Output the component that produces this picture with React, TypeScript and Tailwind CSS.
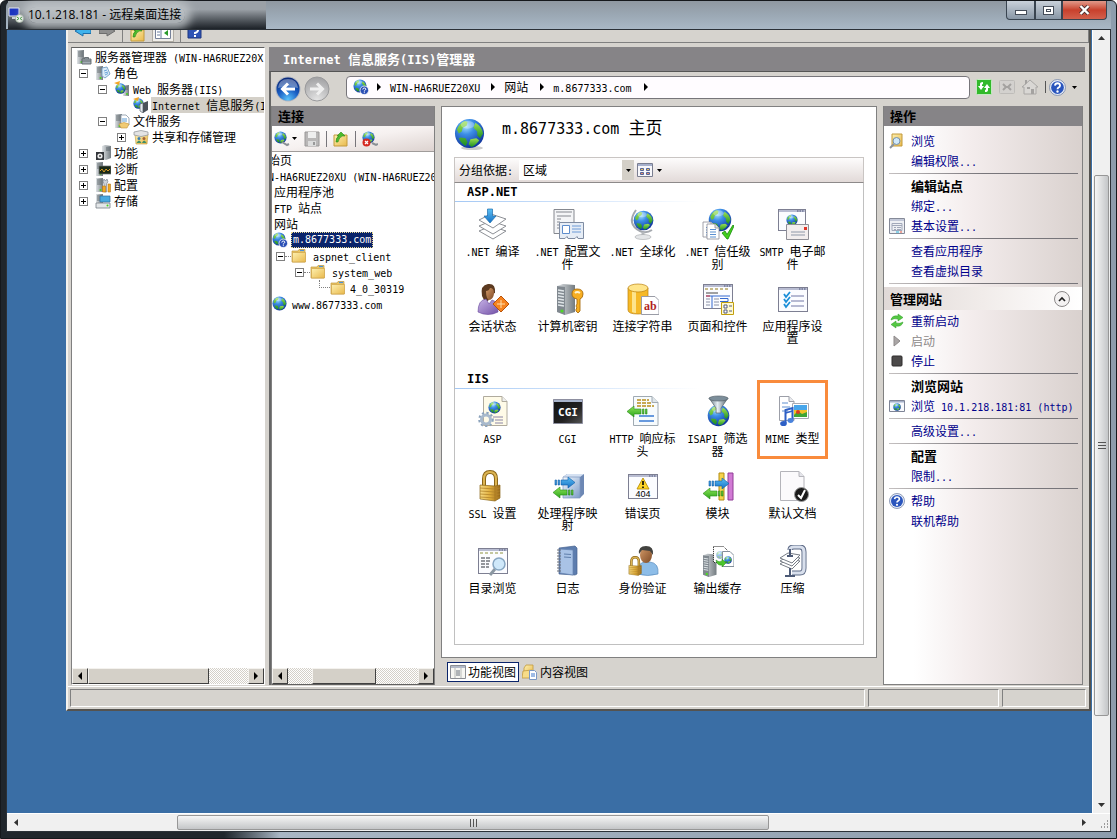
import { Fragment, type ReactNode } from "react";
import clsx from "clsx";

/* ---------- TEXT ---------- */

const latinSize = {
  base: "text-[10px]",
  heading: "text-[12px]",
  title: "text-[15px]",
};

// Latin runs use a half-width mono face so they sit on the same grid as the CJK glyphs
function T({ children, size = "base" }: { children: string; size?: keyof typeof latinSize }) {
  return (
    <>
      {children.split(/([\x20-\x7e]+)/).map((part, i) =>
        i % 2 ? (
          <span
            key={i}
            className={clsx("font-['DejaVu_Sans_Mono','Liberation_Mono',monospace] leading-none", latinSize[size])}
          >
            {part}
          </span>
        ) : (
          <Fragment key={i}>{part}</Fragment>
        )
      )}
    </>
  );
}

/* ---------- DRAWING PARTS ---------- */

function Defs() {
  return (
    <svg width="0" height="0" className="absolute" aria-hidden="true">
      <defs>
        <radialGradient id="sea" cx="0.38" cy="0.25" r="0.8">
          <stop offset="0" stopColor="#a9e2fb" />
          <stop offset="0.35" stopColor="#3c8ee6" />
          <stop offset="1" stopColor="#0c2c96" />
        </radialGradient>
        <linearGradient id="land" x1="0" y1="0" x2="0" y2="1">
          <stop offset="0" stopColor="#9be052" />
          <stop offset="1" stopColor="#1d8f22" />
        </linearGradient>
        <linearGradient id="gold" x1="0" y1="0" x2="1" y2="0">
          <stop offset="0" stopColor="#f7dc86" />
          <stop offset="0.5" stopColor="#e0ae3c" />
          <stop offset="1" stopColor="#99681a" />
        </linearGradient>
        <linearGradient id="folder" x1="0" y1="0" x2="1" y2="1">
          <stop offset="0" stopColor="#fdf0b0" />
          <stop offset="1" stopColor="#e9b94c" />
        </linearGradient>
        <linearGradient id="steel" x1="0" y1="0" x2="1" y2="0">
          <stop offset="0" stopColor="#dfe3e6" />
          <stop offset="1" stopColor="#737b80" />
        </linearGradient>
        <linearGradient id="funnel" x1="0" y1="0" x2="1" y2="0">
          <stop offset="0" stopColor="#5c6f7c" />
          <stop offset="0.45" stopColor="#e6eef3" />
          <stop offset="1" stopColor="#4a5a66" />
        </linearGradient>
        <linearGradient id="box" x1="0" y1="0" x2="1" y2="1">
          <stop offset="0" stopColor="#f4f9fe" />
          <stop offset="1" stopColor="#7c9bc8" />
        </linearGradient>
        <linearGradient id="blueArrow" x1="0" y1="0" x2="0" y2="1">
          <stop offset="0" stopColor="#5cc0f5" />
          <stop offset="1" stopColor="#1670c4" />
        </linearGradient>
        <linearGradient id="greenArrow" x1="0" y1="0" x2="0" y2="1">
          <stop offset="0" stopColor="#8fe45a" />
          <stop offset="1" stopColor="#2ba51a" />
        </linearGradient>
        <radialGradient id="ball" cx="0.5" cy="0.95" r="0.9">
          <stop offset="0" stopColor="#5ac3fb" />
          <stop offset="0.5" stopColor="#1a5fc4" />
          <stop offset="1" stopColor="#0a2a7c" />
        </radialGradient>
        <radialGradient id="grayBall" cx="0.5" cy="0.95" r="0.9">
          <stop offset="0" stopColor="#e4e4e4" />
          <stop offset="1" stopColor="#a4a4a6" />
        </radialGradient>
        <linearGradient id="skin" x1="0" y1="0" x2="1" y2="1">
          <stop offset="0" stopColor="#d49a68" />
          <stop offset="1" stopColor="#7e4a26" />
        </linearGradient>
        <linearGradient id="purple" x1="0" y1="0" x2="1" y2="1">
          <stop offset="0" stopColor="#c7b3e6" />
          <stop offset="1" stopColor="#7453a8" />
        </linearGradient>
        <linearGradient id="dark" x1="0" y1="0" x2="1" y2="1">
          <stop offset="0" stopColor="#111" />
          <stop offset="0.6" stopColor="#222" />
          <stop offset="1" stopColor="#555" />
        </linearGradient>
      </defs>
    </svg>
  );
}

type IconProps = { size?: number; view?: number; children?: ReactNode };

function Icon({ size = 16, view = 16, children }: IconProps) {
  return (
    <svg width={size} height={size} viewBox={`0 0 ${view} ${view}`} className="block shrink-0" aria-hidden="true">
      {children}
    </svg>
  );
}

function Globe({ x = 0, y = 0, s = 16 }: { x?: number; y?: number; s?: number }) {
  return (
    <svg x={x} y={y} width={s} height={s} viewBox="0 0 32 32">
      <circle cx="16" cy="16" r="15" fill="url(#sea)" />
      <path d="M3 12q2-6 8-9l3 1-1 4-4 2-1 4-3 2zM7 20l5 1 2 4-2 4q-5-3-7-8z" fill="url(#land)" />
      <path d="M17 22l6-1 3 2q-3 5-8 7l-3-3z" fill="url(#land)" />
      <path d="M22 5q7 4 8 11l-3 5-3-3 0-4-4-4z" fill="url(#land)" />
      <ellipse cx="14" cy="7" rx="7" ry="4" fill="#fff" opacity="0.3" />
    </svg>
  );
}

function Page({ x, y, w, h, lines = "#5a8fd0" }: { x: number; y: number; w: number; h: number; lines?: string }) {
  return (
    <g>
      <path d={`M${x} ${y}h${w - 4}l4 4v${h - 4}h${-w}z`} fill="#fff" stroke="#8a8c96" strokeWidth="0.8" />
      <path d={`M${x + w - 4} ${y}v4h4`} fill="#e4e6ea" stroke="#8a8c96" strokeWidth="0.8" />
      <path
        d={`M${x + 3} ${y + h / 2 - 2}h${w - 6}m${6 - w} 2.500h${w - 6}m${6 - w} 2.500h${w - 6}m${6 - w} 2.500h${w - 6}`}
        stroke={lines}
        strokeWidth="1.2"
      />
    </g>
  );
}

function Frame({ x = 1, y = 3, w = 29, h = 24 }: { x?: number; y?: number; w?: number; h?: number }) {
  return (
    <g>
      <rect x={x + 0.5} y={y + 0.5} width={w} height={h} fill="#fbfcff" stroke="#7d7f92" />
      <rect x={x + 1} y={y + 1} width={w - 1} height="2" fill="#b9bdd2" />
      <path d={`M${x + w - 8} ${y + 2}h1.5m1 0h1.5m1 0h1.500`} stroke="#4c5478" strokeWidth="1.2" />
    </g>
  );
}

function Tower({ x = 0, y = 0, s = 32 }: { x?: number; y?: number; s?: number }) {
  return (
    <svg x={x} y={y} width={s} height={s} viewBox="0 0 32 32">
      <path d="M4 3l6-2 12 1v27l-10 3-8-3z" fill="url(#steel)" />
      <path d="M4 3l8 1v28l-8-3z" fill="#80888f" />
      <path d="M5 7l6 1M5 10l6 1M5 13l6 1M5 16l6 1M5 19l6 1M5 22l6 1" stroke="#dfe5e8" strokeWidth="1.3" />
      <circle cx="9" cy="28" r="1.600" fill="#4dd827" />
    </svg>
  );
}

function Lock({ x = 0, y = 0, s = 32 }: { x?: number; y?: number; s?: number }) {
  return (
    <svg x={x} y={y} width={s} height={s} viewBox="0 0 32 32">
      <path d="M7 17V9q0-7 6-7t6 7v8" fill="none" stroke="#8a6518" strokeWidth="4" />
      <path d="M7 17V9q0-7 6-7t6 7v8" fill="none" stroke="#dcb452" strokeWidth="2" />
      <path d="M3 15l15 1 5-1v13l-5 3-15-2z" fill="url(#gold)" stroke="#8a6518" strokeWidth="0.7" />
      <path d="M3 18l15 1 5-1M3 21l15 1 5-1M3 24l15 1 5-1M3 27l15 1 5-1" stroke="#b3842a" fill="none" strokeWidth="0.8" />
      <path d="M18 16v15" stroke="#a3741e" strokeWidth="0.7" />
    </svg>
  );
}

function ArrowR({ x, y }: { x: number; y: number }) {
  return (
    <g transform={`translate(${x} ${y})`} fill="url(#blueArrow)" stroke="#0d5ca8" strokeWidth="0.6">
      <path d="M0 3h1.500v5H0zM3 3h1.500v5H3zM6 3h7V0l7 5.500L13 11V8H6z" />
    </g>
  );
}

function ArrowL({ x, y }: { x: number; y: number }) {
  return (
    <g transform={`translate(${x} ${y})`} fill="url(#greenArrow)" stroke="#258a17" strokeWidth="0.6">
      <path d="M20 3h-1.500v5H20zM17 3h-1.500v5H17zM14 3H7V0L0 5.500 7 11V8h7z" />
    </g>
  );
}

function HelpIcon({ size = 17 }: { size?: number }) {
  return (
    <Icon size={size}>
      <circle cx="8" cy="8" r="7.500" fill="#e9eef8" stroke="#7686a8" strokeWidth="0.8" />
      <circle cx="8" cy="8" r="6" fill="#2a55bd" />
      <path d="M5.600 6.200Q5.800 4 8 4t2.400 2Q10.400 7.200 9 8q-1 .6-1 1.600" fill="none" stroke="#fff" strokeWidth="1.700" />
      <circle cx="8" cy="11.800" r="1.100" fill="#fff" />
    </Icon>
  );
}

function GlobeHelp() {
  return (
    <Icon>
      <Globe s={14} />
      <circle cx="11.300" cy="11.300" r="4.300" fill="#2a4fb5" stroke="#fff" strokeWidth="0.8" />
      <path d="M9.800 10.500q0-1.500 1.500-1.500t1.500 1.300q0 .7-1.500 1.500v.7M11.300 13.200v1" fill="none" stroke="#fff" />
    </Icon>
  );
}

function FolderIcon() {
  return (
    <Icon>
      <path d="M1 3h6l1-1.500h6V14H1z" fill="#eac563" stroke="#c29a3c" strokeWidth="0.700" />
      <path d="M1.500 4.500h13V14h-13z" fill="url(#folder)" stroke="#cfa449" strokeWidth="0.700" />
      <path d="M9 2.500h4" stroke="#4a90d8" strokeWidth="1.200" />
    </Icon>
  );
}

function FolderUp() {
  return (
    <Icon>
      <path d="M1 4h13v11H1z" fill="url(#folder)" stroke="#c29a3c" />
      <path d="M3 11q0-5 3-6H4l4-4 4 4H9.500Q6 6 5 11z" fill="#4bbb2c" stroke="#2b861a" strokeWidth="0.600" />
    </Icon>
  );
}

function RolesIcon({ kind }: { kind: string }) {
  return (
    <Icon>
      <path d="M1 1h7v14H1z" fill="url(#steel)" />
      <path d="M2 3h5M2 5h5M2 7h5" stroke="#5d666c" strokeWidth="0.900" />
      <circle cx="5.500" cy="13" r="1" fill="#45d21c" />
      {kind === "server" && <path d="M6 10h9v5H6zM8.500 10V8.500h4V10M6 12h9" fill="#a4adb4" stroke="#5d666c" strokeWidth="0.900" />}
      {kind === "roles" && (
        <>
          <path d="M7 3l5-1 3 7-5 4-3-2z" fill="#dcebf8" stroke="#6f9ec4" strokeWidth="0.900" />
          <path d="M9 6l3-1M9.500 8l3.500-1M10 10l3-1.500" stroke="#4c92cf" strokeWidth="0.800" />
        </>
      )}
      {kind === "files" && (
        <>
          <path d="M7 2h5l3 3v7H7z" fill="#fff" stroke="#8796a5" strokeWidth="0.800" />
          <path d="M8 6h5M8 8h5" stroke="#4c92cf" strokeWidth="0.900" />
          <path d="M5 11q5-3 10 0l-2 4H7z" fill="#f2cb74" stroke="#c4953c" strokeWidth="0.600" />
        </>
      )}
      {kind === "features" && (
        <>
          <path d="M0 0h16v16H0z" fill="#fff" />
          <path d="M7 1l3-1 6 1v12l-5 2-4-1z" fill="url(#steel)" />
          <path d="M11 3h4M11 5h4" stroke="#5d666c" />
          <path d="M1 7h8v8H1z" fill="#33363a" />
          <circle cx="5" cy="11" r="2.600" fill="#eee" />
          <circle cx="5" cy="11" r="1" fill="#444" />
        </>
      )}
      {kind === "diag" && (
        <>
          <path d="M4 5h12v8H4z" fill="#1b2a16" stroke="#6d7176" strokeWidth="0.700" />
          <path d="M5 10l2-2 2 3 2-3 2 2 2-2" fill="none" stroke="#d49b28" />
        </>
      )}
      {kind === "config" && (
        <>
          <path d="M9 7q-2-3 0-5l1.500 2L12 2q2 3-.5 5v8H9.500z" fill="#cdd4dc" stroke="#6b7480" strokeWidth="0.600" />
          <path d="M13 7h2.500v8H13zM7.500 9h3v6h-3z" fill="#f0a824" stroke="#b3761a" strokeWidth="0.600" />
        </>
      )}
      {kind === "storage" && (
        <>
          <path d="M5 3h10v6H5z" fill="#47a9e0" stroke="#2f6f9d" strokeWidth="0.700" />
          <path d="M1 10h14v5H1z" fill="#e3e6e8" stroke="#777f86" strokeWidth="0.800" />
          <circle cx="12.500" cy="12.500" r="1" fill="#45d21c" />
        </>
      )}
      {kind === "share" && (
        <>
          <path d="M0 0h16v16H0z" fill="#fff" />
          <path d="M2 5h13l-1 10H3z" fill="url(#folder)" stroke="#c29a3c" strokeWidth="0.600" />
          <path d="M1 3q7-3 14 0v3q-7 3-14 0z" fill="#e4e4e4" stroke="#8c9094" strokeWidth="0.700" />
          <circle cx="6" cy="9.500" r="1.500" fill="#3c7fb5" />
          <circle cx="11" cy="9.500" r="1.500" fill="#a56234" />
          <path d="M3.500 14q2.500-5 5 0M9 14q2-5 4.500 0" fill="#418e69" />
        </>
      )}
      {kind === "web" && (
        <>
          <path d="M0 0h16v16H0z" fill="#fff" />
          <path d="M9 4h6v11H9z" fill="url(#steel)" />
          <path d="M10 6h4M10 8h4" stroke="#545d64" />
          <circle cx="13" cy="13" r="1" fill="#45d21c" />
          <Globe x={1} y={2} s={11} />
          <path d="M0 2l6-2-1 4z" fill="#f4a526" />
        </>
      )}
      {kind === "iis" && (
        <>
          <path d="M0 0h16v16H0z" fill="#fff" />
          <Globe x={0} y={1} s={11} />
          <path d="M0 2l6-2-1 4z" fill="#f4a526" />
          <path d="M7 7l3-1v10l-3-2z" fill="#e5eaef" stroke="#555e68" strokeWidth="0.700" />
          <path d="M10 6l5-2v9l-5 3z" fill="#4b525a" />
        </>
      )}
    </Icon>
  );
}

function Caret() {
  return (
    <svg width="5" height="3" viewBox="0 0 5 3" className="block shrink-0" aria-hidden="true">
      <path d="M0 0h5L2.500 3z" fill="#000" />
    </svg>
  );
}

function Crumb() {
  return (
    <svg width="4" height="8" viewBox="0 0 4 8" className="block shrink-0" aria-hidden="true">
      <path d="M0 0l4 4-4 4z" fill="#000" />
    </svg>
  );
}

/* ---------- FEATURE ICONS (32 x 32) ---------- */

const featureIcons: Record<string, ReactNode> = {
  compile: (
    <>
      <path d="M2 23l12-5 15 5-13 8z" fill="#fff" stroke="#8d9096" />
      <path d="M2 18l12-5 15 5-13 8z" fill="#fff" stroke="#8d9096" />
      <path d="M2 12l12-6 15 5-13 9z" fill="#fff" stroke="#8d9096" />
      <path d="M10.500 1h5v7H19l-6 7-6-7h3.500z" fill="url(#blueArrow)" stroke="#1c6dae" strokeWidth="0.700" />
    </>
  ),
  config: (
    <>
      <path d="M2 1.500h20v24H2z" fill="#f4f5f7" stroke="#85888f" />
      <path d="M4 4h16M5 8h14M5 11h4M5 14h3M5 17h3M5 20h3" stroke="#85888f" />
      <path d="M7.500 14.500h24v16H26l-1-2-2 2h-7l-1-2-2 2H7.500z" fill="#e6edf6" stroke="#7f8ca2" />
      <path d="M10.500 17.500h7v8h-7z" fill="#fff" stroke="#5d8ccc" />
      <path d="M20 18h9M20 21h9M20 24h9" stroke="#6d9ad6" />
    </>
  ),
  global: (
    <>
      <path d="M9 2q-10 14 4 21 6 3 12-1" fill="none" stroke="#a4a8ae" strokeWidth="2" />
      <path d="M16 24v4" stroke="#b4b8bc" strokeWidth="3" />
      <ellipse cx="16" cy="29" rx="8" ry="2.500" fill="#e4e6e8" stroke="#a2a6aa" strokeWidth="0.600" />
      <Globe x={6} y={2} s={21} />
    </>
  ),
  trust: (
    <>
      <Globe x={6} y={0} s={24} />
      <Page x={1} y={14} w={12} h={15} />
      <Page x={5} y={16} w={12} h={15} />
      <path d="M20 25l3-2 2 3.500L31 17l1 1-6 13h-1z" fill="#43cf1b" stroke="#188b0e" strokeWidth="0.800" />
    </>
  ),
  smtp: (
    <>
      <Frame y={1} h={21} w={27} />
      <Globe x={9} y={6} s={12} />
      <path d="M9.500 16.500h22v15h-22z" fill="#f2eeee" stroke="#8f8f96" />
      <path d="M27 19h3v3h-3z" fill="#e03428" />
      <path d="M14 24h14M14 27h14" stroke="#8e98a8" />
    </>
  ),
  session: (
    <>
      <path d="M5 13Q3 2 11 1q8-1 7 9l-3 1-4 7-4-1z" fill="#5c3a20" />
      <path d="M9 8q3 0 4-3 4 0 4 5t-4 7q-4 0-4-9z" fill="url(#skin)" />
      <path d="M1 29q0-12 8-13l3 5 3-4q6 1 6 12-10 5-20 0z" fill="url(#purple)" stroke="#68489c" strokeWidth="0.600" />
      <path d="M24 13l8 8-8 8-8-8z" fill="#f58421" stroke="#b95209" />
      <path d="M20 21h8M24 17v8" stroke="#ffe1b0" />
    </>
  ),
  machinekey: (
    <>
      <Tower x={1} />
      <path d="M25 6q6 0 6 5 0 4-3 5v12l-2 2-2-2v-2l1-1-1-2 1-2v-5q-5-1-5-5 0-5 5-5z" fill="#f7ae22" stroke="#a86d10" strokeWidth="0.900" />
      <path d="M23 10q2-2 5 0" fill="none" stroke="#fff4d0" strokeWidth="2" />
    </>
  ),
  conn: (
    <>
      <path d="M1 5v22q0 4 10 4t10-4V5z" fill="#f6b927" stroke="#ba8110" strokeWidth="0.700" />
      <path d="M5 8v21q2 1 4 1V9z" fill="#fde48c" />
      <ellipse cx="11" cy="5" rx="10" ry="4" fill="#ffe58a" stroke="#ba8110" strokeWidth="0.700" />
      <path d="M14.500 13.500H28l4 4v14H14.500z" fill="#fff" stroke="#9a9ca6" />
      <text x="17" y="27" fontSize="12" fontWeight="700" fill="#b01f24" fontFamily="Liberation Serif, serif">
        ab
      </text>
    </>
  ),
  controls: (
    <>
      <Frame y={1} h={24} />
      <path d="M3 6h25" stroke="#c7bb8c" strokeWidth="2" strokeDasharray="3 2" />
      <path d="M4 10h12" stroke="#444" />
      <path d="M4 13h24M10 13v12M18 15.500h8v3h-8" fill="none" stroke="#3469cf" />
      <path d="M4 13h4" stroke="#dd2c2c" />
      <path d="M4 16h4M4 19h4M4 22h4M12 16h5M12 19h5M12 22h5" stroke="#8a91a6" />
      <path d="M19.500 19.500h12v12h-12z" fill="#fff9cf" stroke="#c29f0d" />
      <path d="M22 22h3v3h-3zM22 27h3v3h-3z" fill="#fff" stroke="#525a80" />
      <path d="M27 23h3M27 28h3" stroke="#525a80" />
    </>
  ),
  appset: (
    <>
      <Frame y={4} h={24} />
      <path d="M14 13h13M14 18h13M14 23h13" stroke="#7077a6" />
      <path d="M7 11l2 3 4-5M7 16l2 3 4-5M7 21l2 3 4-5" fill="none" stroke="#1c8fd8" strokeWidth="1.800" />
    </>
  ),
  asp: (
    <>
      <path d="M6.500 1.500H25l5 5v24H6.500z" fill="#fffbe8" stroke="#b0ab9e" />
      <path d="M25 1.500v5h5" fill="#eee" stroke="#b0ab9e" />
      <Globe x={11} y={6} s={13} />
      <path d="M16 22h10M18 25h8M18 28h8" stroke="#8b86a8" />
      <circle cx="9" cy="24.500" r="4.500" fill="none" stroke="#a8b9cc" strokeWidth="3" />
      <circle cx="9" cy="24.500" r="6.800" fill="none" stroke="#8ba2bb" strokeWidth="2" strokeDasharray="2.300 2.300" />
    </>
  ),
  cgi: (
    <>
      <path d="M1.500 4.500h29v24h-29z" fill="url(#dark)" stroke="#8d8fa0" />
      <path d="M2 5h28v2H2z" fill="#a8b4cc" />
      <text x="16" y="21" fontSize="11" fontWeight="700" textAnchor="middle" fill="#fff" fontFamily="DejaVu Sans Mono, monospace">
        CGI
      </text>
    </>
  ),
  http: (
    <>
      <path d="M6.500 1.500H25l6 6v23H6.500z" fill="#f7fbfd" stroke="#a0aab2" />
      <path d="M25 1.500v6h6" fill="#dfe5ea" stroke="#a0aab2" />
      <path d="M10 5h12M10 8h14M10 11h17" stroke="#b98f1c" strokeDasharray="4 1" strokeWidth="1.600" />
      <path d="M12 21h15M12 26h15" stroke="#3a7bd4" strokeWidth="1.400" />
      <ArrowL x={0} y={11} />
    </>
  ),
  isapi: (
    <>
      <Globe x={5} y={9} s={23} />
      <path d="M7 3l7 10v5h5v-5l7-10z" fill="url(#funnel)" stroke="#57636b" strokeWidth="0.700" />
      <ellipse cx="16.500" cy="3.500" rx="9.500" ry="2.500" fill="#7c8e9a" stroke="#57636b" strokeWidth="0.700" />
    </>
  ),
  mime: (
    <>
      <path d="M2.500 1.500H12l5 5v19H2.500z" fill="#fff" stroke="#9c9fa8" />
      <path d="M12 1.500v5h5" fill="#e9ebef" stroke="#9c9fa8" />
      <path d="M5 8h6M5 12h8M5 16h6" stroke="#5f8fd0" />
      <path d="M15.500 8.500h16v15h-16z" fill="#fff" stroke="#a8aab2" />
      <path d="M17 10h13v5H17z" fill="#48a6ea" />
      <path d="M17 15h13v7H17z" fill="#f1c227" />
      <path d="M17 20l4-4 4 3 5-2v5H17z" fill="#3fa535" />
      <circle cx="21" cy="17" r="2" fill="#dd3a22" />
      <path d="M8.500 28V15l7-2v12" fill="none" stroke="#2d5fc5" strokeWidth="2" />
      <path d="M8.500 18l7-2" stroke="#2d5fc5" strokeWidth="1.500" />
      <ellipse cx="6.500" cy="28.500" rx="3.300" ry="2.600" fill="#2d5fc5" />
      <ellipse cx="13.500" cy="25.500" rx="3" ry="2.400" fill="#4a83dd" />
    </>
  ),
  ssl: <Lock />,
  handler: (
    <>
      <path d="M11 7l4-3h17v20l-4 4H11z" fill="#6d88b4" />
      <path d="M11 7l4-3h17l-4 3z" fill="#d5e1f2" />
      <path d="M11 7h17v21H11z" fill="url(#box)" stroke="#7d97be" strokeWidth="0.700" />
      <ArrowR x={3} y={7} />
      <ArrowL x={1} y={17} />
    </>
  ),
  error: (
    <>
      <Frame y={4} h={24} />
      <path d="M16 8l6 11H10z" fill="#ffd526" stroke="#b98e08" strokeWidth="0.900" />
      <path d="M16 11v4M16 16.500v1.500" stroke="#000" strokeWidth="1.600" />
      <text x="16" y="27" fontSize="9" textAnchor="middle" fill="#000" fontFamily="Liberation Sans, sans-serif">
        404
      </text>
    </>
  ),
  modules: (
    <>
      <path d="M17 3h5v27h-5z" fill="#f6d34b" stroke="#b38d14" />
      <path d="M26 3h5v27h-5z" fill="#d17ad4" stroke="#903d96" />
      <ArrowR x={7} y={8} />
      <ArrowL x={1} y={18} />
    </>
  ),
  defdoc: (
    <>
      <path d="M3.500 1.500H22l5 5v24H3.500z" fill="#fbfafc" stroke="#b4b4ba" />
      <path d="M22 1.500v5h5" fill="#e5e5ea" stroke="#b4b4ba" />
      <circle cx="24.500" cy="24.500" r="7" fill="#1b1b1b" stroke="#9a9a9a" />
      <path d="M21 25l3 3 4-8" fill="none" stroke="#fff" strokeWidth="2" />
    </>
  ),
  browse: (
    <>
      <Frame y={3} h={25} />
      <path d="M3 8h25" stroke="#c5c8a0" strokeWidth="2" strokeDasharray="3 2" />
      <path d="M4 13h10M4 16h10M4 19h8M4 22h8" stroke="#2f333d" strokeWidth="1.200" strokeDasharray="4 1" />
      <path d="M18 24l-5 6" stroke="#8b97a2" strokeWidth="3" />
      <circle cx="22" cy="19" r="6" fill="#cfe8fa" stroke="#87a6c2" strokeWidth="1.500" />
    </>
  ),
  log: (
    <>
      <path d="M7 3l16-2 2 2v26l-2 1-16-1z" fill="#5d7dae" stroke="#47638f" strokeWidth="0.700" />
      <path d="M8 4l13 1v25L8 28z" fill="#a9c3e6" stroke="#6483b0" strokeWidth="0.700" />
      <path d="M12 9l7 .5M12 12l7 .5" stroke="#5f7fab" />
      <path d="M5 5h4M5 8h4M5 11h4M5 14h4M5 17h4M5 20h4M5 23h4M5 26h4" stroke="#6a6f78" strokeWidth="1.100" />
    </>
  ),
  auth: (
    <>
      <path d="M10 29q0-12 9-12h4q9 1 8 12-10 3-21 0z" fill="#8dbde8" stroke="#5a8dbd" strokeWidth="0.700" />
      <ellipse cx="19" cy="10" rx="6" ry="8" fill="url(#skin)" />
      <path d="M12 9q-1-8 7-8 8 0 7 9l-3-4-8-1z" fill="#42423f" />
      <Lock x={0} y={11} s={20} />
    </>
  ),
  cache: (
    <>
      <Tower x={-2} y={8} s={24} />
      <path d="M11.500 1.500h10l4 4v12h-14z" fill="#fff" stroke="#222" strokeDasharray="1 1" />
      <g opacity="0.5">
        <Globe x={14} y={6} s={8} />
      </g>
      <path d="M20.500 6.500H28l4 4v11H20.500z" fill="#fff" stroke="#85909c" />
      <Globe x={22} y={11} s={8} />
      <path d="M14 15q3 3 6 1v-2l4 4-4 4v-2q-5 1-6-5z" fill="#4bc52b" stroke="#258a17" strokeWidth="0.500" />
    </>
  ),
  compress: (
    <>
      <path d="M13 5q0-3 4-3h6q4 0 4 5v16q0 5-4 5h-8" fill="none" stroke="#5d6a86" strokeWidth="5" />
      <path d="M13 5q0-3 4-3h6q4 0 4 5v16q0 5-4 5h-8" fill="none" stroke="#d8dfec" strokeWidth="3.200" />
      <path d="M3 19l8-5 12 2-8 8z" fill="#fff" stroke="#777d86" />
      <path d="M3 16l8-5 12 2-8 8z" fill="#fff" stroke="#777d86" />
      <path d="M3 13l8-5 12 2-8 8z" fill="#fff" stroke="#777d86" />
      <path d="M13 4v6M10 11h6M13 23v7M8 31h10" stroke="#4d5a76" strokeWidth="2" />
    </>
  ),
};

const groups = [
  {
    name: "ASP.NET",
    items: [
      ["compile", ".NET 编译"],
      ["config", ".NET 配置文件"],
      ["global", ".NET 全球化"],
      ["trust", ".NET 信任级别"],
      ["smtp", "SMTP 电子邮件"],
      ["session", "会话状态"],
      ["machinekey", "计算机密钥"],
      ["conn", "连接字符串"],
      ["controls", "页面和控件"],
      ["appset", "应用程序设置"],
    ],
  },
  {
    name: "IIS",
    items: [
      ["asp", "ASP"],
      ["cgi", "CGI"],
      ["http", "HTTP 响应标头"],
      ["isapi", "ISAPI 筛选器"],
      ["mime", "MIME 类型"],
      ["ssl", "SSL 设置"],
      ["handler", "处理程序映射"],
      ["error", "错误页"],
      ["modules", "模块"],
      ["defdoc", "默认文档"],
      ["browse", "目录浏览"],
      ["log", "日志"],
      ["auth", "身份验证"],
      ["cache", "输出缓存"],
      ["compress", "压缩"],
    ],
  },
];

/* ---------- SCROLL BARS ---------- */

const raised = "border border-t-[#f4f2ee] border-l-[#f4f2ee] border-r-[#404040] border-b-[#404040] bg-[#d4d0c8]";

function ClassicScroll({ before, thumb, after }: { before: string; thumb: string; after: string }) {
  return (
    <div className="flex h-4 shrink-0 bg-[repeating-conic-gradient(#ffffff_0_25%,#d4d0c8_0_50%)] bg-[length:2px_2px]">
      <button aria-label="向左滚动" className={clsx("flex w-4 items-center justify-center", raised)}>
        <svg width="4" height="8" viewBox="0 0 4 8"><path d="M4 0v8L0 4z" /></svg>
      </button>
      <div className={before} />
      <div className={clsx(thumb, raised)} />
      <div className={after} />
      <button aria-label="向右滚动" className={clsx("flex w-4 items-center justify-center", raised)}>
        <Crumb />
      </button>
    </div>
  );
}

/* ---------- TREES ---------- */

function Expander({ open }: { open: boolean }) {
  return (
    <button
      aria-label={open ? "折叠" : "展开"}
      className="flex h-[9px] w-[9px] items-center justify-center border border-[#808080] bg-white"
    >
      <svg width="5" height="5" viewBox="0 0 5 5" aria-hidden="true">
        <path d={open ? "M0 2h5v1H0z" : "M0 2h5v1H0zM2 0h1v5H2z"} />
      </svg>
    </button>
  );
}

const serverTree = [
  { indent: "pl-1", icon: "server", text: "服务器管理器 (WIN-HA6RUEZ20X" },
  { indent: "pl-1", open: true, icon: "roles", text: "角色" },
  { indent: "pl-[23px]", open: true, icon: "web", text: "Web 服务器(IIS)" },
  { indent: "pl-[61px]", icon: "iis", text: "Internet 信息服务(I", selected: true },
  { indent: "pl-[23px]", open: true, icon: "files", text: "文件服务" },
  { indent: "pl-[42px]", open: false, icon: "share", text: "共享和存储管理" },
  { indent: "pl-1", open: false, icon: "features", text: "功能" },
  { indent: "pl-1", open: false, icon: "diag", text: "诊断" },
  { indent: "pl-1", open: false, icon: "config", text: "配置" },
  { indent: "pl-1", open: false, icon: "storage", text: "存储" },
];

function ServerTree() {
  return (
    <div className="flex w-[194px] shrink-0 flex-col border border-t-[#606060] border-l-[#808080] border-r-white border-b-white bg-white">
      <ul role="tree" className="flex-1 overflow-hidden pt-px">
        {serverTree.map((row) => (
          <li key={row.text} role="treeitem" className={clsx("flex h-4 items-center whitespace-nowrap", row.indent)}>
            {row.open !== undefined && (
              <span className="flex w-[19px] shrink-0 pl-[3px]">
                <Expander open={row.open} />
              </span>
            )}
            <RolesIcon kind={row.icon} />
            <span className={clsx("ml-0.5 flex h-4 items-center pl-px", row.selected && "flex-1 bg-[#d4d0c8]")}>
              <span className="whitespace-pre"><T>{row.text}</T></span>
            </span>
          </li>
        ))}
      </ul>
      <ClassicScroll before="w-0" thumb="w-[121px]" after="flex-1" />
    </div>
  );
}

function Dots() {
  return <span className="w-1.5 shrink-0 border-t border-dotted border-[#808080]" />;
}

function ConnectionTree() {
  const row = "flex h-4 items-center";
  return (
    <div className="flex-1 overflow-hidden bg-white">
      {/* scrolled to the right, the root labels are cut off */}
      <ul role="tree" className="-ml-4 whitespace-pre">
        <li role="treeitem" className={row}>起始页</li>
        <li role="treeitem" className={row}><span><T>WIN-HA6RUEZ20XU (WIN-HA6RUEZ20</T></span></li>
        <li role="treeitem" className={clsx(row, "pl-[18px]")}>应用程序池</li>
        <li role="treeitem" className={clsx(row, "pl-[18px]")}><span><T>FTP 站点</T></span></li>
        <li role="treeitem" className={clsx(row, "pl-[18px]")}>网站</li>
        <li role="treeitem" aria-selected="true" className={clsx(row, "pl-4")}>
          <GlobeHelp />
          <span className="ml-[3px] flex h-4 items-center border border-dotted border-[#e8d890] bg-[#0a246a] px-px text-white">
            <T>m.8677333.com</T>
          </span>
        </li>
        <li role="treeitem" className={clsx(row, "pl-5")}>
          <Expander open />
          <Dots />
          <FolderIcon />
          <span className="ml-1.5"><T>aspnet_client</T></span>
        </li>
        <li role="treeitem" className={clsx(row, "pl-[39px]")}>
          <Expander open />
          <Dots />
          <FolderIcon />
          <span className="ml-1.5"><T>system_web</T></span>
        </li>
        <li role="treeitem" className={clsx(row, "pl-[63px]")}>
          <span className="mb-2 h-2 w-[11px] border-b border-l border-dotted border-[#808080]" />
          <FolderIcon />
          <span className="ml-1"><T>4_0_30319</T></span>
        </li>
        <li role="treeitem" className={clsx(row, "pl-4")}>
          <Icon><Globe s={15} /></Icon>
          <span className="ml-1"><T>www.8677333.com</T></span>
        </li>
      </ul>
    </div>
  );
}

function Connections() {
  return (
    <section className="flex w-[164px] shrink-0 flex-col border-r border-l border-[#808080]">
      <h2 className="flex h-5 shrink-0 items-center bg-[#868487] px-1.5 text-[13px] font-bold text-black">连接</h2>
      <div className="flex h-[26px] shrink-0 items-center border-b border-[#a09c9a] bg-linear-to-br from-white via-[#f6f1f0] to-[#ddd3d0] px-0.5">
        <button aria-label="连接" className="flex items-center gap-0.5">
          <Icon>
            <Globe s={13} />
            <path d="M8 11l5 3 2-1" fill="none" stroke="#8a9096" strokeWidth="2" />
          </Icon>
          <Caret />
        </button>
        <button aria-label="保存" className="ml-[7px]">
          <Icon>
            <path d="M1 1h14v14H1z" fill="#b9b7b7" stroke="#9a9898" />
            <path d="M4 1h8v6H4z" fill="#eee" />
            <path d="M4 10h8v5H4z" fill="#ddd" />
            <path d="M9 11h2v3H9z" fill="#999" />
          </Icon>
        </button>
        <span className="mx-1.5 h-4 w-px bg-[#77757a]" />
        <button aria-label="向上"><FolderUp /></button>
        <span className="mx-1.5 h-4 w-px bg-[#77757a]" />
        <button aria-label="断开">
          <Icon>
            <Globe s={13} />
            <path d="M10 12l4 2 2-1" fill="none" stroke="#8a9096" strokeWidth="2" />
            <circle cx="4.500" cy="11.500" r="4" fill="#d42a22" />
            <path d="M3 10l3 3m0-3l-3 3" stroke="#fff" strokeWidth="1.300" />
          </Icon>
        </button>
      </div>
      <ConnectionTree />
      <ClassicScroll before="w-6" thumb="w-16" after="flex-1" />
      <div className="h-px bg-[#606060]" />
    </section>
  );
}

/* ---------- CENTER ---------- */

function FeatureView() {
  return (
    <main className="flex min-w-0 flex-1 flex-col">
      <div className="flex flex-1 flex-col border border-[#808080] bg-white px-3 pb-3">
        <h1 className="flex h-[50px] items-center gap-4 pt-1 text-[17px]">
          <Icon size={32} view={32}>
            <ellipse cx="18" cy="30" rx="11" ry="2" fill="#ccc" />
            <Globe x={0} y={0} s={31} />
          </Icon>
          <span className="pb-3 whitespace-pre"><T size="title">m.8677333.com 主页</T></span>
        </h1>
        <div className="flex h-[26px] items-center border border-[#c9c5c3] border-b-[#8d8a8a] bg-linear-to-b from-[#fdfcfc] to-[#e2dad8] pl-1">
          <label htmlFor="group-by" className="w-[60px] whitespace-nowrap"><T>分组依据:</T></label>
          <div className="flex h-5 w-[115px] items-center bg-white">
            <select id="group-by" className="w-[103px] appearance-none bg-white pl-1 text-[12px] outline-none">
              <option>区域</option>
              <option>类别</option>
              <option>无分组</option>
            </select>
            <span className="flex h-5 w-3 items-center justify-center bg-[#d4d0c8]"><Caret /></span>
          </div>
          <button aria-label="视图" className="ml-[3px] flex items-center gap-1">
            <Icon>
              <path d="M.5 1.500h15v13H.5z" fill="#f7f7fb" stroke="#7a7e90" />
              <path d="M1 2h14v2H1z" fill="#a6b0cc" />
              <path d="M3.500 6.500h3v2h-3zM9.500 6.500h3v2h-3z" fill="#e8c05a" stroke="#54649a" />
              <path d="M3.500 10.500h3v2h-3zM9.500 10.500h3v2h-3z" fill="#e58f6a" stroke="#54649a" />
            </Icon>
            <Caret />
          </button>
        </div>
        <div className="flex-1 border border-t-0 border-[#c0c0c0]">
          {groups.map((g) => (
            <section key={g.name} className="pb-3 last:pb-0">
              <h2 className="flex h-[18px] items-center pl-3 font-bold"><T size="heading">{g.name}</T></h2>
              <div className="h-px bg-linear-to-r from-[#a4c8f4] to-white to-60%" />
              <ul className="grid grid-cols-[repeat(5,75px)] pt-1.5">
                {g.items.map(([icon, label]) => (
                  <li key={icon} className="relative h-[75px]">
                    <button className="flex w-full flex-col items-center">
                      <Icon size={32} view={32}>{featureIcons[icon]}</Icon>
                      <span className="mt-[5px] w-[70px] text-center leading-3"><T>{label}</T></span>
                    </button>
                    {icon === "mime" && (
                      <span className="pointer-events-none absolute -top-[15px] left-[2px] h-[79px] w-[71px] border-3 border-[#f98b3c]" />
                    )}
                  </li>
                ))}
              </ul>
            </section>
          ))}
        </div>
      </div>
      {/* VIEW TABS */}
      <div className="flex h-[27px] items-center pl-1.5">
        <button className="flex h-5 items-center gap-0.5 border border-[#0a246a] bg-white px-0.5">
          <Icon>
            <path d="M.5 1.500h15v13H.5z" fill="#f7f7f3" stroke="#8b8e94" />
            <path d="M1 2h14v2H1z" fill="#b3bac8" />
            <path d="M5 4v10M11 4v10" stroke="#b9bbb8" />
            <path d="M6 7h4M6 9h4M6 11h4" stroke="#68717a" />
          </Icon>
          <span>功能视图</span>
        </button>
        <button className="flex h-5 items-center gap-0.5 px-[3px]">
          <Icon>
            <path d="M2 4l2-3h7v10H2z" fill="url(#folder)" stroke="#c29a3c" strokeWidth="0.800" />
            <path d="M1 7l9-1-1 8H0z" fill="#f7dc88" stroke="#c29a3c" strokeWidth="0.800" />
            <path d="M7.500 6.500h5l2 2v7h-7z" fill="#fff" stroke="#7b98c4" />
            <path d="M9 10h4M9 12h4" stroke="#3e78cd" />
          </Icon>
          <span>内容视图</span>
        </button>
      </div>
    </main>
  );
}

/* ---------- ACTIONS ---------- */

const browseIcon = (
  <Icon>
    <path d="M3 1h10v12H3z" fill="url(#folder)" stroke="#c29a3c" />
    <path d="M5 11l-4 4" stroke="#8a929c" strokeWidth="2" />
    <circle cx="7.500" cy="8" r="3.500" fill="#cfe8fa" stroke="#7490aa" />
  </Icon>
);
const basicIcon = (
  <Icon>
    <path d="M.5 .5h15v15H.5z" fill="#eef0f4" stroke="#858a98" />
    <path d="M1 1h14v2H1z" fill="#c2c8d8" />
    <path d="M3 5.500h10v7H3zM3 7.500h10M5 9.500h2m1 0h4M5 11.500h2m1 0h4" fill="none" stroke="#a2a9ba" />
    <path d="M7 14h3" stroke="#26b2d8" />
    <path d="M11 14h2" stroke="#ee5b40" />
  </Icon>
);
const restartIcon = (
  <Icon>
    <path d="M2 7q1-5 7-4V1l5 3.500L9 8V6Q5 5 2 7z" fill="#55c843" stroke="#2e9a28" strokeWidth="0.500" />
    <path d="M14 9q-1 5-7 4v2l-5-3.500L7 8v2q4 1 7-1z" fill="#55c843" stroke="#2e9a28" strokeWidth="0.500" />
  </Icon>
);
const startIcon = (
  <Icon><path d="M5 3l6 5-6 5z" fill="#aaa6a6" stroke="#8e8a8a" /></Icon>
);
const stopIcon = (
  <Icon><rect x="3" y="3" width="10" height="10" rx="1" fill="#4c4a4a" stroke="#2e2c2c" /></Icon>
);
const siteIcon = (
  <Icon>
    <path d="M.5 2.500h15v11H.5z" fill="#f8fafd" stroke="#7e8496" />
    <path d="M1 3h14v1.500H1z" fill="#a6b0c8" />
    <Globe x={4} y={5} s={8} />
  </Icon>
);

type ActionRow = { text: string; icon?: ReactNode; heading?: boolean; disabled?: boolean };

function ActionList({ rows }: { rows: ActionRow[] }) {
  return (
    <ul>
      {rows.map((r) => (
        <li key={r.text} className="flex h-5 items-center gap-1.5 whitespace-nowrap">
          <span className="flex w-4 shrink-0 justify-center">{r.icon}</span>
          {r.heading ? (
            <h3 className="text-[13px] font-bold text-black">{r.text}</h3>
          ) : r.disabled ? (
            <button disabled className="text-[#8c8888]">{r.text}</button>
          ) : (
            <a href="#" className="whitespace-pre text-[#00008b]"><T>{r.text}</T></a>
          )}
        </li>
      ))}
    </ul>
  );
}

function Rule() {
  return (
    <div className="flex h-[5px] items-center">
      <div className="h-px flex-1 bg-linear-to-r from-[#c4c0c0] via-[#77757a] to-[#77757a]" />
    </div>
  );
}

function Actions() {
  return (
    <aside className="flex w-[200px] shrink-0 flex-col border-r border-b border-l border-[#808080] bg-linear-to-r from-white from-15% via-[#f3ecec] via-45% to-[#d9d1ce]">
      <h2 className="flex h-5 items-center bg-[#868487] pl-1.5 text-[13px] font-bold">操作</h2>
      <div className="pt-[5px] pr-1 pl-[5px]">
        <ActionList rows={[{ text: "浏览", icon: browseIcon }, { text: "编辑权限..." }]} />
        <Rule />
        <ActionList rows={[{ text: "编辑站点", heading: true }, { text: "绑定..." }, { text: "基本设置...", icon: basicIcon }]} />
        <Rule />
        <ActionList rows={[{ text: "查看应用程序" }, { text: "查看虚拟目录" }]} />
        <Rule />
      </div>
      <div className="my-px flex h-[23px] items-center justify-between bg-linear-to-r from-[#e0d9d7] via-[#f1ecea] to-white pr-3 pl-1.5">
        <h2 className="text-[13px] font-bold">管理网站</h2>
        <button aria-label="折叠" className="flex h-4 w-4 items-center justify-center rounded-full border border-[#8b8888] bg-[#f4f2f2]">
          <svg width="8" height="6" viewBox="0 0 8 6" aria-hidden="true">
            <path d="M1 5l3-3 3 3" fill="none" stroke="#222" strokeWidth="1.700" />
          </svg>
        </button>
      </div>
      <div className="pr-1 pl-[5px]">
        <ActionList
          rows={[
            { text: "重新启动", icon: restartIcon },
            { text: "启动", icon: startIcon, disabled: true },
            { text: "停止", icon: stopIcon },
          ]}
        />
        <Rule />
        <ActionList rows={[{ text: "浏览网站", heading: true }, { text: "浏览 10.1.218.181:81 (http)", icon: siteIcon }]} />
        <Rule />
        <ActionList rows={[{ text: "高级设置..." }]} />
        <Rule />
        <ActionList rows={[{ text: "配置", heading: true }, { text: "限制..." }]} />
        <Rule />
        <ActionList rows={[{ text: "帮助", icon: <HelpIcon size={16} /> }, { text: "联机帮助" }]} />
      </div>
    </aside>
  );
}

/* ---------- NAVIGATION ---------- */

function NavBar() {
  return (
    <nav className="flex h-[34px] items-center pr-2 pl-1">
      <button aria-label="后退">
        <Icon size={26} view={26}>
          <circle cx="13" cy="13" r="12.500" fill="#aeb4c0" />
          <circle cx="13" cy="13" r="11.500" fill="url(#ball)" />
          <path d="M3 12q1-9 10-9t10 9q-10-3-20 0z" fill="#fff" opacity="0.35" />
          <path d="M20 13H8M13 7.500L7.500 13l5.500 5.500" fill="none" stroke="#fff" strokeWidth="3" />
        </Icon>
      </button>
      <button aria-label="前进" className="ml-[3px]">
        <Icon size={26} view={26}>
          <circle cx="13" cy="13" r="12" fill="url(#grayBall)" stroke="#9a9a9c" />
          <path d="M6 13h12M13 7.500l5.500 5.500-5.500 5.500" fill="none" stroke="#efefef" strokeWidth="3" />
        </Icon>
      </button>
      <div className="mr-1.5 mb-1 ml-4 flex h-[23px] flex-1 items-center rounded-sm border border-[#77757a] bg-[#fffcff] pl-1.5 whitespace-nowrap">
        <GlobeHelp />
        <span className="ml-2"><Crumb /></span>
        <button className="ml-[9px]"><T>WIN-HA6RUEZ20XU</T></button>
        <span className="ml-[11px]"><Crumb /></span>
        <button className="ml-[9px]">网站</button>
        <span className="ml-3"><Crumb /></span>
        <button className="ml-[9px]"><T>m.8677333.com</T></button>
        <span className="ml-3"><Crumb /></span>
      </div>
      <div className="mb-1 flex items-center gap-[7px]">
        <button aria-label="刷新">
          <Icon>
            <rect x="0.500" y="0.500" width="15" height="15" rx="1" fill="#32b92b" stroke="#c2eac0" />
            <path d="M2 7h2V5q0-2 3-2v2q-1 0-1 1v1h2L5 11zM14 9h-2v2q0 2-3 2v-2q1 0 1-1V9H8l3-4z" fill="#fff" />
          </Icon>
        </button>
        <button aria-label="停止">
          <Icon>
            <rect x="0.500" y="1.500" width="15" height="13" rx="1" fill="#d3d1ce" stroke="#bebcb9" />
            <path d="M4 5l3 3-3 3m8-6l-3 3 3 3M6 8h4" fill="none" stroke="#a4a2a0" strokeWidth="2" />
          </Icon>
        </button>
        <button aria-label="主页">
          <Icon>
            <path d="M0 8l8-7 8 7h-2v7H2V8z" fill="#d9d7d4" stroke="#aaa8a6" />
            <path d="M3 1h2v3L3 6zM9 10h3v5H9zM5 8h3v2H5z" fill="#a4a2a0" />
          </Icon>
        </button>
        <span className="flex items-center gap-[3px]">
          <span className="h-3 w-px bg-[#555]" />
          <button aria-label="帮助" className="flex items-center gap-1.5">
            <HelpIcon />
            <Caret />
          </button>
        </span>
      </div>
    </nav>
  );
}

function Toolbar() {
  return (
    <div className="flex h-[13px] shrink-0 items-end overflow-hidden border-r border-b border-[#808080] pl-[7px]">
      <Icon><path d="M0 5l8-5v2.500h8v5H8V10z" fill="#3fb2ec" stroke="#1e6ea8" /></Icon>
      <span className="ml-2"><Icon><path d="M16 5L8 0v2.500H0v5h8V10z" fill="#8f8f8f" stroke="#6d6d6d" /></Icon></span>
      <span className="mx-[7px] h-4 w-px bg-[#808080]" />
      <FolderUp />
      <span className="ml-1.5 flex h-5 w-[22px] items-end justify-center border border-[#b0aca4] bg-[#f0eeea]">
        <Icon>
          <path d="M.5 2.500h15v11H.5z" fill="#fff" stroke="#77829a" />
          <path d="M6 3v10M2 7h3M2 10h3" stroke="#6c7fa0" />
          <path d="M13 5v6L9 8z" fill="#2a9a2a" />
        </Icon>
      </span>
      <span className="mx-1.5 h-4 w-px bg-[#808080]" />
      <Icon>
        <path d="M1 0h13v12H1z" fill="#2f53b5" stroke="#1c3680" />
        <path d="M5 4q0-3 3-3t3 3q0 2-3 3v1M8 9v2" fill="none" stroke="#fff" strokeWidth="2" />
      </Icon>
    </div>
  );
}

/* ---------- WINDOWS ---------- */

const sunken = "border border-t-[#808080] border-l-[#808080] border-r-white border-b-white";

function ServerManager() {
  return (
    <div className="mr-px mb-[102px] ml-[59px] flex flex-1 flex-col border-r-2 border-b-2 border-l-2 border-r-[#55534f] border-b-[#55534f] border-l-[#f4f2ee] bg-[#d6d3ce]">
      <Toolbar />
      <div className="mt-1 flex flex-1 pr-1 pl-[3px]">
        <ServerTree />
        <section className="ml-1 flex min-w-0 flex-1 flex-col">
          <h1 className="flex h-6 shrink-0 items-center bg-[#868487] pl-3.5 text-[13px] font-bold whitespace-pre text-white">
            <span><T size="heading">Internet 信息服务(IIS)管理器</T></span>
          </h1>
          <div className="flex flex-1 flex-col border-t border-l-2 border-t-[#555] border-l-[#666]">
            <NavBar />
            <div className="flex flex-1">
              <Connections />
              <div className="flex min-w-0 flex-1 px-1.5">
                <FeatureView />
              </div>
              <Actions />
              <div className="w-0.5" />
            </div>
          </div>
        </section>
      </div>
      <footer className="mt-px flex h-[23px] shrink-0 gap-[3px] border-t border-white pt-0.5 pr-[3px] pb-0.5 pl-0.5">
        <div className={clsx("flex-1", sunken)} />
        <div className={clsx("w-[131px]", sunken)} />
        <div className={clsx("w-[84px]", sunken)} />
      </footer>
    </div>
  );
}

function TitleBar() {
  const btn = "flex h-[19px] items-center justify-center border-r border-b border-l border-[#394450]";
  return (
    <header className="flex h-7 shrink-0 items-start rounded-t-md bg-linear-to-b from-[#8f98a1] via-[#9ba8b4] to-[#a9b8c6] pl-0.5">
      <div className="flex h-7 flex-1 items-center gap-1">
        <div className="flex h-7 w-[258px] items-center gap-1 bg-linear-to-b from-[#9ba1a7] from-30% to-[#1d2228]">
          <Icon>
            <path d="M1 1h10v8H1z" fill="#1c35c0" stroke="#e4e8f0" />
            <path d="M4 10h5v2H4z" fill="#ccd3da" />
            <circle cx="11.500" cy="11.500" r="4" fill="#f2f4f0" stroke="#8ca088" strokeWidth="0.700" />
            <path d="M9 10l2 1.500L9 13m5-3l-2 1.500 2 1.500" fill="none" stroke="#2d9a28" />
          </Icon>
          <span className="rounded-full bg-[#c3c8cc]/80 pr-1 font-['Open_Sans','Noto_Sans_CJK_SC',sans-serif] whitespace-pre text-black shadow-[0_0_8px_6px_rgba(195,200,204,0.8)]">
            10.1.218.181 - 远程桌面连接
          </span>
        </div>
      </div>
      <div className="mr-1 flex">
        <button aria-label="最小化" className={clsx(btn, "w-[29px] rounded-bl bg-linear-to-b from-[#c9d1da] to-[#8997a6]")}>
          <span className="mt-1 h-[5px] w-3 border border-[#444c58] bg-white" />
        </button>
        <button aria-label="最大化" className={clsx(btn, "w-[27px] bg-linear-to-b from-[#c9d1da] to-[#8997a6]")}>
          <span className="flex h-[9px] w-[11px] items-center justify-center border border-[#444c58] bg-white">
            <span className="h-[3px] w-[5px] border border-[#444c58]" />
          </span>
        </button>
        <button aria-label="关闭" className={clsx(btn, "w-[45px] rounded-br bg-linear-to-b from-[#e0998a] via-[#c8402c] to-[#d2604c]")}>
          <svg width="11" height="10" viewBox="0 0 11 10" aria-hidden="true">
            <path d="M1.500 1l8 8m0-8l-8 8" stroke="#4a3030" strokeWidth="4" />
            <path d="M1.500 1l8 8m0-8l-8 8" stroke="#fff" strokeWidth="2.400" />
          </svg>
        </button>
      </div>
    </header>
  );
}

export default function App() {
  return (
    <div className="flex min-h-screen flex-col rounded-t-md border border-[#15181c] bg-linear-to-r from-[#20262c] from-20% via-[#a9b6c4] via-25% to-[#8d9cac] px-[5px] pb-1.5 font-['Noto_Sans_CJK_SC',sans-serif] text-[12px] leading-4 text-black">
      <Defs />
      <TitleBar />
      <div className="flex flex-1 flex-col border border-[#2b3138]">
        <div className="flex flex-1">
          <div className="flex min-w-0 flex-1 bg-[#3a6ea5]">
            <ServerManager />
          </div>
          <div className="flex w-[18px] shrink-0 flex-col items-center border-l border-white bg-[#f0f0f0]">
            <button aria-label="向上滚动" className="flex h-4 items-center">
              <svg width="7" height="4" viewBox="0 0 7 4"><path d="M0 4l3.500-4L7 4z" fill="#333" /></svg>
            </button>
            <div className="h-[129px]" />
            <div className="mb-[81px] flex w-[15px] flex-1 flex-col items-center justify-center gap-0.5 rounded-xs border border-[#979797] bg-linear-to-r from-[#f6f6f6] to-[#c4c6c8]">
              <span className="h-px w-2 bg-[#555]" />
              <span className="h-px w-2 bg-[#555]" />
              <span className="h-px w-2 bg-[#555]" />
            </div>
            <button aria-label="向下滚动" className="flex h-4 items-center">
              <svg width="7" height="4" viewBox="0 0 7 4"><path d="M0 0h7L3.500 4z" fill="#333" /></svg>
            </button>
          </div>
        </div>
        <div className="flex h-[18px] shrink-0 items-center border-t border-white bg-[#f0f0f0]">
          <button aria-label="向左滚动" className="flex w-[17px] justify-center">
            <svg width="4" height="7" viewBox="0 0 4 7"><path d="M4 0v7L0 3.500z" fill="#333" /></svg>
          </button>
          <div className="w-[153px]" />
          <div className="flex h-[15px] flex-1 items-center justify-center gap-0.5 rounded-xs border border-[#979797] bg-linear-to-b from-[#f6f6f6] to-[#c4c6c8]">
            <span className="h-2 w-px bg-[#555]" />
            <span className="h-2 w-px bg-[#555]" />
            <span className="h-2 w-px bg-[#555]" />
          </div>
          <div className="w-[306px]" />
          <button aria-label="向右滚动" className="flex w-[17px] justify-center">
            <svg width="4" height="7" viewBox="0 0 4 7"><path d="M0 0l4 3.500L0 7z" fill="#333" /></svg>
          </button>
          <svg width="18" height="16" viewBox="0 0 18 16" aria-hidden="true">
            <path d="M15 6h1M12 9h1m2 0h1M9 12h1m2 0h1m2 0h1" stroke="#9a9a9a" strokeWidth="2" />
          </svg>
        </div>
      </div>
    </div>
  );
}
